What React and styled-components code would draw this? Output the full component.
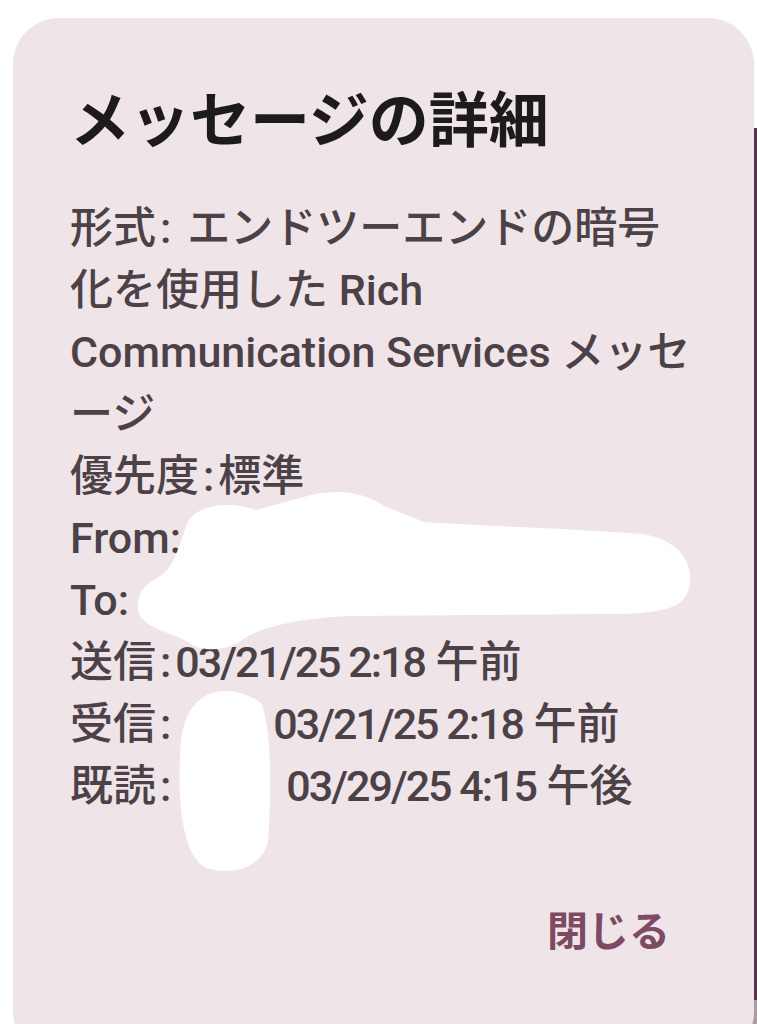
import React from "react"
import styled, { createGlobalStyle } from "styled-components"

const GlobalStyle = createGlobalStyle`
  html, body {
    margin: 0;
    padding: 0;
    background: #ffffff;
  }
`

const colors = {
  card: "#efe4e8",
  title: "#1d1a1c",
  text: "#4b4146",
  accent: "#7d4a63",
  edge: "#5c3447",
  edgeGrey: "#ab9ca3",
}

const font = `Roboto, "Noto Sans CJK JP", "Noto Sans", sans-serif`

const Page = styled.div`
  position: relative;
  width: 757px;
  height: 1024px;
  overflow: hidden;
  display: flex;
  align-items: flex-start;
  background-color: #ffffff;
  background-image: linear-gradient(
    #ffffff 0 128px,
    ${colors.edge} 128px 1000px,
    ${colors.edgeGrey} 1000px
  );
  background-size: 60px 100%;
  background-position: right top;
  background-repeat: no-repeat;
`

const Card = styled.section`
  box-sizing: border-box;
  width: 741px;
  height: 1040px;
  margin: 18px 0 0 13px;
  padding: 62px 50px 0 57px;
  border-radius: 46px;
  background: ${colors.card};
  font-family: ${font};
  display: flex;
  flex-direction: column;
`

const Title = styled.h1`
  margin: 0;
  font-size: 60px;
  line-height: 72px;
  font-weight: 700;
  color: ${colors.title};
  font-family: "Noto Sans CJK JP", sans-serif;
`

const Details = styled.div`
  margin-top: 45px;
  color: ${colors.text};
  font-size: 43px;
  line-height: 62px;
  font-weight: 500;
`

const Line = styled.div`
  white-space: nowrap;
`

const Colon = styled.span`
  margin: 0 ${(p) => p.$after || 4}px 0 4px;
`

const Stamp = styled.span`
  letter-spacing: -2px;
`

const Gap = styled.span`
  display: inline-block;
  width: ${(p) => p.$w}px;
`

const Footer = styled.div`
  display: flex;
  justify-content: flex-end;
  margin-top: 86px;
  padding-right: 34px;
`

const CloseButton = styled.button`
  border: none;
  background: transparent;
  padding: 0;
  font-family: "Noto Sans CJK JP", sans-serif;
  font-size: 41px;
  line-height: 50px;
  font-weight: 700;
  color: ${colors.accent};
  cursor: pointer;
`

const Redaction = styled.svg`
  position: absolute;
  inset: 0;
  pointer-events: none;
`

const App = () => {
  return (
    <>
      <GlobalStyle />
      <Page>
        <Card>
          <Title>メッセージの詳細</Title>
          <Details>
            <Line>
              形式<Colon $after={16}>:</Colon>エンドツーエンドの暗号
              <br />
              化を使用した Rich
              <br />
              Communication Services メッセ
              <br />
              ージ
            </Line>
            <Line>
              優先度<Colon>:</Colon>標準
            </Line>
            <Line>From:</Line>
            <Line>To:</Line>
            <Line>
              送信<Colon>:</Colon>
              <Stamp>03/21/25 2:18</Stamp> 午前
            </Line>
            <Line>
              受信<Colon>:</Colon>
              <Gap $w={98} />
              <Stamp>03/21/25 2:18</Stamp> 午前
            </Line>
            <Line>
              既読<Colon>:</Colon>
              <Gap $w={111} />
              <Stamp>03/29/25 4:15</Stamp> 午後
            </Line>
          </Details>
          <Footer>
            <CloseButton>閉じる</CloseButton>
          </Footer>
        </Card>
        <Redaction width="757" height="1024" viewBox="0 0 757 1024">
          <path
            fill="#ffffff"
            d="M 188 522 C 196 506, 226 500, 256 510 L 300 498 C 330 488, 362 490, 384 506 L 424 522 C 480 526, 566 528, 642 534 C 682 540, 696 566, 688 592 C 680 612, 650 614, 600 614 L 352 616 C 302 618, 262 626, 242 640 C 226 652, 200 652, 188 642 C 170 632, 150 630, 140 616 C 134 600, 140 586, 160 576 C 176 566, 180 540, 188 522 Z"
          />
          <path
            fill="#ffffff"
            d="M 202 698 C 216 686, 246 690, 262 704 C 273 740, 271 800, 268 842 C 262 868, 232 876, 206 868 C 182 856, 178 800, 180 760 C 180 730, 186 710, 202 698 Z"
          />
        </Redaction>
      </Page>
    </>
  )
}

export default App
